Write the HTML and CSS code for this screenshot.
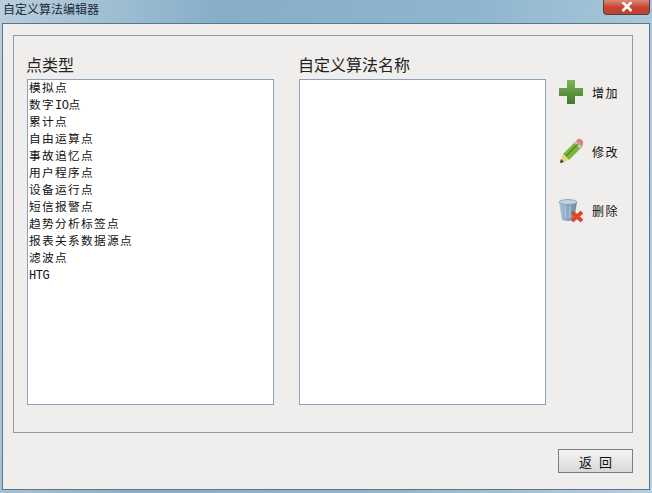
FILE: index.html
```html
<!DOCTYPE html>
<html lang="zh-CN">
<head>
    <meta charset="UTF-8">
    <title>自定义算法编辑器</title>
    <link rel="stylesheet" href="styles.css">
</head>
<body>
    <div class="window">
        <div class="titlebar">
            <span class="title">自定义算法编辑器</span>
            <div class="close-btn">
                <svg width="12" height="10" viewBox="0 0 12 10">
                    <path d="M1.5 0 L10.5 9 M10.5 0 L1.5 9" stroke="#fff" stroke-width="2.6" fill="none"/>
                </svg>
            </div>
        </div>
        <div class="client">
            <div class="panel">
                <div class="col">
                    <div class="col-title">点类型</div>
                    <ul class="list">
                        <li>模拟点</li>
                        <li>数字<span class="latin">IO</span>点</li>
                        <li>累计点</li>
                        <li>自由运算点</li>
                        <li>事故追忆点</li>
                        <li>用户程序点</li>
                        <li>设备运行点</li>
                        <li>短信报警点</li>
                        <li>趋势分析标签点</li>
                        <li>报表关系数据源点</li>
                        <li>滤波点</li>
                        <li><span class="latin">HTG</span></li>
                    </ul>
                </div>
                <div class="col">
                    <div class="col-title">自定义算法名称</div>
                    <ul class="list"></ul>
                </div>
                <div class="actions">
                    <div class="action">
                        <svg width="26" height="26" viewBox="0 0 26 26">
                            <defs>
                                <linearGradient id="plus" x1="0" y1="0" x2="0" y2="1">
                                    <stop offset="0" stop-color="#7fb25a"/>
                                    <stop offset="1" stop-color="#3f7a2c"/>
                                </linearGradient>
                            </defs>
                            <path d="M9 1 H17 V9 H25 V17 H17 V25 H9 V17 H1 V9 H9 Z" fill="url(#plus)"/>
                        </svg>
                        <span>增加</span>
                    </div>
                    <div class="action">
                        <svg width="26" height="26" viewBox="0 0 26 26">
                            <path d="M5 16 L18 3 L24 9 L11 22 Z" fill="#7fb43c"/>
                            <path d="M5 16 L11 22 L2 25 Z" fill="#f0d27a"/>
                            <path d="M2 25 L3 21 L6 24 Z" fill="#333"/>
                            <path d="M18 3 L20 1 Q22 0 24 2 Q26 4 25 6 L24 9 Z" fill="#d9808a"/>
                            <path d="M17 4 L23 10" stroke="#ccc" stroke-width="2"/>
                            <path d="M8 18 L20 6" stroke="#4f8a28" stroke-width="1.4"/>
                        </svg>
                        <span>修改</span>
                    </div>
                    <div class="action">
                        <svg width="26" height="26" viewBox="0 0 26 26">
                            <defs>
                                <linearGradient id="bin" x1="0" y1="0" x2="1" y2="0">
                                    <stop offset="0" stop-color="#a9c4d8"/>
                                    <stop offset="0.5" stop-color="#86a6c2"/>
                                    <stop offset="1" stop-color="#6c8ba8"/>
                                </linearGradient>
                            </defs>
                            <path d="M1 5 L4 23 Q10 25 16 23 L19 5 Z" fill="url(#bin)"/>
                            <ellipse cx="10" cy="5" rx="9" ry="2.4" fill="#c3d4df" stroke="#8fa6b8"/>
                            <path d="M7 9 L8 21 M12 9 L11.5 21" stroke="#b4c9da" stroke-width="1.2"/>
                            <path d="M14 15 L24 24 M24 15 L14 24" stroke="#e0452a" stroke-width="3.8"/>
                        </svg>
                        <span>删除</span>
                    </div>
                </div>
            </div>
            <div class="footer">
                <button class="back-btn">返 回</button>
            </div>
        </div>
    </div>
</body>
</html>
```

FILE: styles.css
```css
* {
    box-sizing: border-box;
}

html, body {
    margin: 0;
    height: 100%;
}

body {
    font-family: "Noto Sans CJK SC", "Liberation Sans", sans-serif;
    color: #111;
}

.window {
    width: 652px;
    height: 493px;
    display: flex;
    flex-direction: column;
    background: linear-gradient(100deg, #b9cfdd 0%, #86aec9 30%, #8fb6cf 65%, #b4d0e0 100%);
    padding: 0 2px 3px 2px;
}

.titlebar {
    height: 23px;
    display: flex;
    justify-content: space-between;
    align-items: flex-start;
    padding-left: 1px;
}

.title {
    font-size: 12px;
    line-height: 16px;
    margin-top: 1px;
    color: #1a2a35;
}

.close-btn {
    width: 47px;
    height: 15px;
    display: flex;
    justify-content: center;
    align-items: flex-end;
    background: linear-gradient(#d98a78, #c9402e 55%, #b8473c);
    border: 1px solid #5c3a3a;
    border-top: none;
    border-radius: 0 0 4px 4px;
    padding-bottom: 2px;
}

.client {
    flex: 1;
    display: flex;
    flex-direction: column;
    background: #f0eeec;
    border: 1px solid #5d7688;
    padding: 11px 16px 16px 10px;
}

.panel {
    height: 398px;
    border: 1px solid #9a9a9a;
    display: flex;
    padding: 18px 0 27px 13px;
    gap: 25px;
}

.col {
    width: 247px;
    display: flex;
    flex-direction: column;
}

.col-title {
    font-size: 16px;
    line-height: 20px;
    height: 25px;
    margin-left: -1px;
    color: #222;
}

.list {
    flex: 1;
    margin: 0;
    padding: 0 0 0 1px;
    list-style: none;
    background: #fff;
    border: 1px solid #8aa2bb;
}

.list li {
    font-size: 11.7px;
    letter-spacing: 1.3px;
    line-height: 13px;
    height: 17px;
    white-space: nowrap;
}

.latin {
    font-family: "Liberation Mono", monospace;
    font-size: 12px;
    line-height: 1;
    letter-spacing: -0.5px;
}

.actions {
    display: flex;
    flex-direction: column;
    gap: 33px;
    margin-left: -13px;
    padding-top: 25px;
}

.action {
    display: flex;
    align-items: center;
    gap: 8px;
    font-size: 12px;
    letter-spacing: 1.5px;
    height: 26px;
}

.footer {
    flex: 1;
    display: flex;
    justify-content: flex-end;
    align-items: flex-start;
    padding-top: 16px;
}

.back-btn {
    width: 75px;
    height: 24px;
    padding: 0;
    font-family: inherit;
    font-size: 13px;
    word-spacing: 4px;
    color: #111;
    border: 1px solid #7d7d7d;
    background: linear-gradient(#f4f4f4, #d8d8d8);
}
```
